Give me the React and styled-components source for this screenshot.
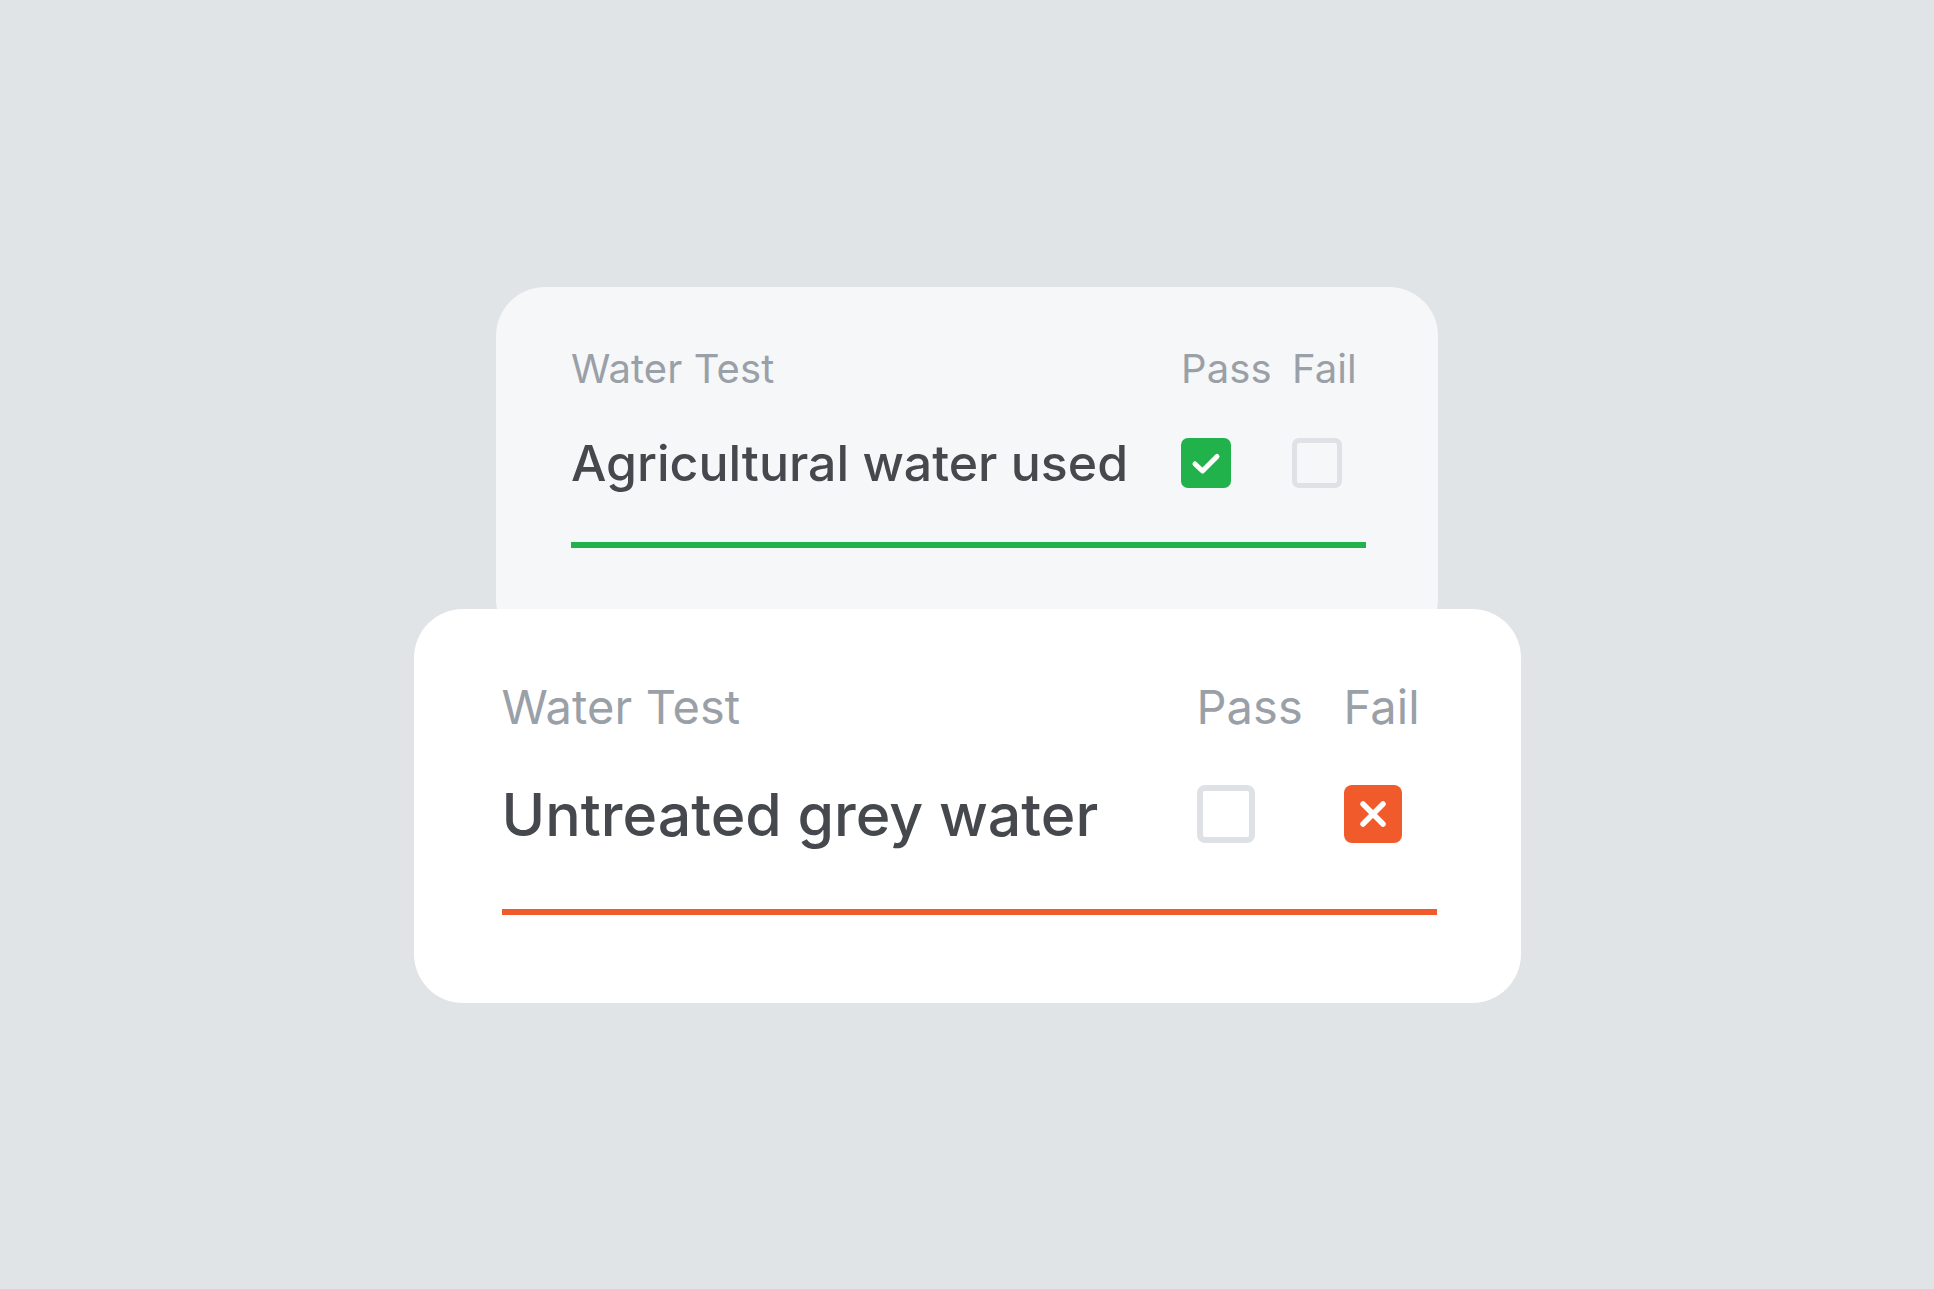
import React from 'react'
import styled, { createGlobalStyle } from 'styled-components'

const GlobalStyle = createGlobalStyle`
  * { box-sizing: border-box; }
  body {
    margin: 0;
    font-family: Inter, "Noto Sans", "Liberation Sans", sans-serif;
    background: #e0e4e7;
  }
`

const Page = styled.main`
  height: 100vh;
  display: flex;
  align-items: center;
  justify-content: center;
`

const Stack = styled.div`
  display: flex;
  flex-direction: column;
  align-items: center;
`

const Card = styled.section`
  width: ${p => p.$s.width}px;
  padding: ${p => p.$s.pad.join('px ')}px;
  background: ${p => p.$front ? '#ffffff' : '#f6f7f9'};
  border-radius: ${p => p.$s.radius}px;
  margin-top: ${p => p.$front ? -39 : 0}px;
  position: relative;
`

const Table = styled.div`
  display: grid;
  grid-template-columns: 1fr ${p => p.$s.cols.map(c => c + 'px').join(' ')};
  row-gap: ${p => p.$s.rowGap}px;
  align-items: center;
`

const Label = styled.div`
  font-size: ${p => p.$s.label}px;
  line-height: ${p => Math.round(p.$s.label * 1.2)}px;
  color: #9aa0a7;
  font-weight: 400;
  letter-spacing: 0.1px;
`

const Name = styled.div`
  font-size: ${p => p.$s.name}px;
  line-height: ${p => Math.round(p.$s.name * 1.2)}px;
  color: #45494e;
  font-weight: 500;
`

const Box = styled.div`
  width: ${p => p.$size}px;
  height: ${p => p.$size}px;
  border-radius: ${p => Math.round(p.$size * 0.13)}px;
  display: flex;
  align-items: center;
  justify-content: center;
  background: ${p => p.$state === 'pass' ? '#22b24c' : p.$state === 'fail' ? '#f15a2b' : 'transparent'};
  border: ${p => p.$state === 'empty' ? `${Math.round(p.$size * 0.1)}px solid #dee1e5` : 'none'};

  svg {
    display: block;
  }
`

const Rule = styled.div`
  height: 6px;
  margin-top: ${p => p.$s.ruleGap}px;
  background: ${p => p.$color};
`

const Check = ({ size }) => (
  <svg width={size} height={size} viewBox="0 0 50 50" fill="none">
    <path d="M14 26 L21.5 33 L36 18.5" stroke="#fff" strokeWidth="5" strokeLinecap="round" strokeLinejoin="round" />
  </svg>
)

const Cross = ({ size }) => (
  <svg width={size} height={size} viewBox="0 0 58 58" fill="none">
    <path d="M19 19 L39 39 M39 19 L19 39" stroke="#fff" strokeWidth="5.5" strokeLinecap="round" />
  </svg>
)

const Checkbox = ({ state, size }) => (
  <Box $state={state} $size={size}>
    {state === 'pass' && <Check size={size} />}
    {state === 'fail' && <Cross size={size} />}
  </Box>
)

const back = {
  width: 942, pad: [58, 72, 100, 75], radius: 49,
  cols: [111, 74], rowGap: 40, label: 40, name: 50, box: 50, ruleGap: 49,
}

const front = {
  width: 1107, pad: [70, 84, 88, 88], radius: 49,
  cols: [147, 93], rowGap: 44, label: 47, name: 59, box: 58, ruleGap: 59,
}

const TestCard = ({ s, front: isFront, name, result }) => (
  <Card $s={s} $front={isFront}>
    <Table $s={s}>
      <Label $s={s}>Water Test</Label>
      <Label $s={s}>Pass</Label>
      <Label $s={s}>Fail</Label>
      <Name $s={s}>{name}</Name>
      <Checkbox size={s.box} state={result === 'pass' ? 'pass' : 'empty'} />
      <Checkbox size={s.box} state={result === 'fail' ? 'fail' : 'empty'} />
    </Table>
    <Rule $s={s} $color={result === 'pass' ? '#22b24c' : '#f15a2b'} />
  </Card>
)

export default function App() {
  return (
    <Page>
      <GlobalStyle />
      <Stack>
        <TestCard s={back} name="Agricultural water used" result="pass" />
        <TestCard s={front} front name="Untreated grey water" result="fail" />
      </Stack>
    </Page>
  )
}
